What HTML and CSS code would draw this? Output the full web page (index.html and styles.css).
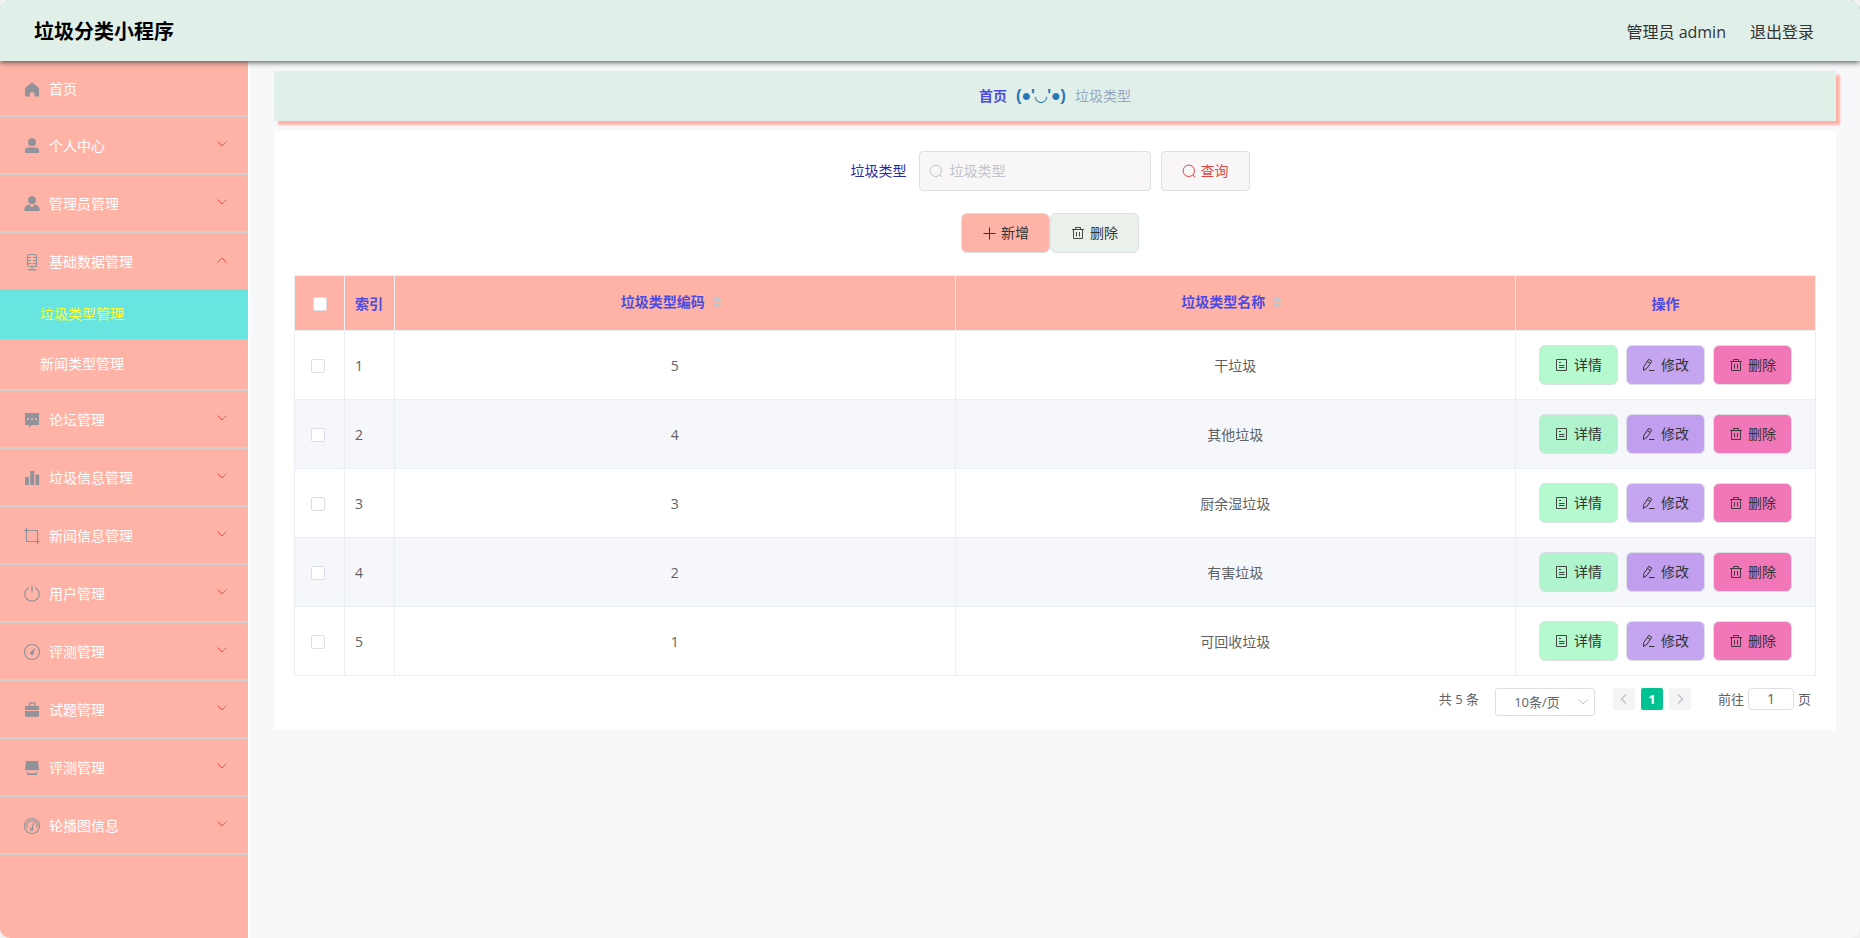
FILE: index.html
```html
<!DOCTYPE html>
<html lang="zh-CN">
<head>
<meta charset="utf-8">
<title>垃圾分类小程序</title>
<link rel="stylesheet" href="styles.css">
</head>
<body>
<svg class="sprite" aria-hidden="true">
  <symbol id="i-down" viewBox="0 0 12 12"><path d="M1.5 3.5 6 8l4.500-4.500" fill="none" stroke="currentColor"/></symbol>
  <symbol id="i-left" viewBox="0 0 12 12"><path d="M8 1.500 3.500 6 8 10.500" fill="none" stroke="currentColor" stroke-width="1.500"/></symbol>
  <symbol id="i-right" viewBox="0 0 12 12"><path d="M4 1.500 8.500 6 4 10.500" fill="none" stroke="currentColor" stroke-width="1.500"/></symbol>
  <symbol id="i-search" viewBox="0 0 14 14"><g fill="none" stroke="currentColor"><circle cx="6.800" cy="6.800" r="5.700"/><path d="m10.800 10.800 2.200 2.200"/></g></symbol>
  <symbol id="i-plus" viewBox="0 0 14 14"><path d="M7.500 1.500v12M1.500 7.500h12" fill="none" stroke="currentColor"/></symbol>
  <symbol id="i-trash" viewBox="0 0 14 14"><path d="M1 3.500h12M2.500 3.500v9h9v-9M4.500 3.500v-2h5v2M5.500 6v4.500M8.500 6v4.500" fill="none" stroke="currentColor" stroke-width=".9"/></symbol>
  <symbol id="i-doc" viewBox="0 0 14 14"><path d="M1.500 1.500h10v11h-10zM4 4.500h2M4 7.500h5.500M4 9.500h5.500" fill="none" stroke="currentColor" stroke-width=".9"/></symbol>
  <symbol id="i-edit" viewBox="0 0 14 14"><path d="M1.500 12.500 1.800 8.600 6.800 1.300 9.800 3.200 5 10.300zM5.300 3.500 8.300 5.400M7 12.500h5.500" fill="none" stroke="currentColor"/></symbol>
  <symbol id="i-home" viewBox="0 0 18 18"><path d="M9 2.500 16 8v8.500h-4.500v-4h-4.500v4H2V8z" fill="currentColor"/></symbol>
  <symbol id="i-user" viewBox="0 0 18 18"><path d="M9 1.200a4 4 0 1 1 0 8 4 4 0 0 1 0-8zM5 10.500h8q3 0 3 3V16H2v-2.500q0-3 3-3z" fill="currentColor"/></symbol>
  <symbol id="i-admin" viewBox="0 0 18 18"><path d="M9 1.200a4 4 0 1 1 0 8 4 4 0 0 1 0-8zM6.300 9.300 9 12.500l2.700-3.200c3 .7 5 2.700 5 5.200V16H1.300v-1.500c0-2.500 2-4.500 5-5.200z" fill="currentColor"/></symbol>
  <symbol id="i-mic" viewBox="0 0 18 18"><g fill="none" stroke="currentColor" stroke-width="1.200"><rect x="4.500" y="1.500" width="9" height="12" rx="2"/><path d="M5 4.500h3M10 4.500h3M5 7.500h3M10 7.500h3M5 10.500h3M10 10.500h3M9 13.500v3.500M4.500 16.800h9"/></g></symbol>
  <symbol id="i-chat" viewBox="0 0 18 18"><path d="M2 2h14v12H9l-3 2.500V14H2zM4 7.200v1.800h1.800V7.200zM8.100 7.200v1.800h1.800V7.200zM12.200 7.200v1.800h1.800V7.200z" fill="currentColor" fill-rule="evenodd"/></symbol>
  <symbol id="i-bars" viewBox="0 0 18 18"><path d="M2 8h4v8H2zM7.200 2h4v14h-4zM12.400 5.500h3.800V16h-3.800z" fill="currentColor"/></symbol>
  <symbol id="i-crop" viewBox="0 0 18 18"><path d="M1 3.500h13.500V17M3.500 1v13.500H17" fill="none" stroke="currentColor" stroke-width="1.200"/></symbol>
  <symbol id="i-power" viewBox="0 0 18 18"><path d="M9 .5v7M5.800 2.600a7.200 7.200 0 1 0 6.400 0" fill="none" stroke="currentColor" stroke-width="1.200"/></symbol>
  <symbol id="i-compass" viewBox="0 0 18 18"><circle cx="9" cy="9" r="7.500" fill="none" stroke="currentColor" stroke-width="1.200"/><path d="M12.200 4.800 10.600 10.800Q9.500 12.600 7.800 11.800 6.300 10.600 7.500 9z" fill="currentColor"/></symbol>
  <symbol id="i-case" viewBox="0 0 18 18"><path d="M6 1.500h6.500V5H16v4H2V5h4zM7.300 2.800V5h3.900V2.800zM2 10h14v5.800H2z" fill="currentColor" fill-rule="evenodd"/></symbol>
  <symbol id="i-goods" viewBox="0 0 18 18"><path d="M3 2h12l1 8.500-1.500 1.300-1.800-1-1.900 1-1.800-1-1.800 1-1.900-1-1.800 1L2 10.500zM4 13h1.300v1.300h7.400V13H14v3H4z" fill="currentColor"/></symbol>
  <symbol id="i-gauge" viewBox="0 0 18 18"><g fill="none" stroke="currentColor" stroke-width="1.200"><circle cx="9" cy="9" r="7.500"/><path d="M4.300 11A5.200 5.200 0 1 1 13.700 11M10.500 6 9.300 11"/><circle cx="8.800" cy="12.300" r="1.200"/></g></symbol>
</svg>
<div class="app">
  <header class="topbar">
    <h1 class="brand">垃圾分类小程序</h1>
    <nav class="account">
      <span>管理员 admin</span>
      <a href="#">退出登录</a>
    </nav>
  </header>
  <div class="body">
    <aside class="sidebar">
      <ul class="menu">
        <li class="item first"><a href="#"><svg class="ico"><use href="#i-home"/></svg>首页</a></li>
        <li class="item"><a href="#"><svg class="ico"><use href="#i-user"/></svg>个人中心<svg class="arrow"><use href="#i-down"/></svg></a></li>
        <li class="item"><a href="#"><svg class="ico"><use href="#i-admin"/></svg>管理员管理<svg class="arrow"><use href="#i-down"/></svg></a></li>
        <li class="item open"><a href="#"><svg class="ico"><use href="#i-mic"/></svg>基础数据管理<svg class="arrow"><use href="#i-down"/></svg></a>
          <ul class="submenu">
            <li><a class="active" href="#">垃圾类型管理</a></li>
            <li><a href="#">新闻类型管理</a></li>
          </ul>
        </li>
        <li class="item"><a href="#"><svg class="ico"><use href="#i-chat"/></svg>论坛管理<svg class="arrow"><use href="#i-down"/></svg></a></li>
        <li class="item"><a href="#"><svg class="ico"><use href="#i-bars"/></svg>垃圾信息管理<svg class="arrow"><use href="#i-down"/></svg></a></li>
        <li class="item"><a href="#"><svg class="ico"><use href="#i-crop"/></svg>新闻信息管理<svg class="arrow"><use href="#i-down"/></svg></a></li>
        <li class="item"><a href="#"><svg class="ico"><use href="#i-power"/></svg>用户管理<svg class="arrow"><use href="#i-down"/></svg></a></li>
        <li class="item"><a href="#"><svg class="ico"><use href="#i-compass"/></svg>评测管理<svg class="arrow"><use href="#i-down"/></svg></a></li>
        <li class="item"><a href="#"><svg class="ico"><use href="#i-case"/></svg>试题管理<svg class="arrow"><use href="#i-down"/></svg></a></li>
        <li class="item"><a href="#"><svg class="ico"><use href="#i-goods"/></svg>评测管理<svg class="arrow"><use href="#i-down"/></svg></a></li>
        <li class="item"><a href="#"><svg class="ico"><use href="#i-gauge"/></svg>轮播图信息<svg class="arrow"><use href="#i-down"/></svg></a></li>
      </ul>
    </aside>
    <main class="main">
      <nav class="crumbs">
        <a href="#">首页</a>
        <span class="face">(●'◡'●)</span>
        <span class="here">垃圾类型</span>
      </nav>
      <section class="card">
        <form class="query">
          <label for="kind">垃圾类型</label>
          <div class="search">
            <svg class="glyph"><use href="#i-search"/></svg>
            <input id="kind" type="text" placeholder="垃圾类型">
          </div>
          <button class="btn find" type="button"><svg class="glyph"><use href="#i-search"/></svg>查询</button>
        </form>
        <div class="tools">
          <button class="btn add" type="button"><svg class="glyph"><use href="#i-plus"/></svg>新增</button>
          <button class="btn remove" type="button"><svg class="glyph"><use href="#i-trash"/></svg>删除</button>
        </div>
        <table class="grid">
          <colgroup><col class="c-check"><col class="c-index"><col><col><col class="c-ops"></colgroup>
          <thead>
            <tr>
              <th class="check"><input type="checkbox" aria-label="全选"></th>
              <th class="index">索引</th>
              <th><span class="sortable">垃圾类型编码<span class="carets"></span></span></th>
              <th><span class="sortable">垃圾类型名称<span class="carets"></span></span></th>
              <th>操作</th>
            </tr>
          </thead>
          <tbody>
            <tr><td class="check"><input type="checkbox" aria-label="选择 1"></td><td class="index">1</td><td>5</td><td>干垃圾</td><td class="actions"><div class="ops"><button class="btn op view" type="button"><svg class="glyph"><use href="#i-doc"/></svg>详情</button><button class="btn op edit" type="button"><svg class="glyph"><use href="#i-edit"/></svg>修改</button><button class="btn op del" type="button"><svg class="glyph"><use href="#i-trash"/></svg>删除</button></div></td></tr>
            <tr><td class="check"><input type="checkbox" aria-label="选择 2"></td><td class="index">2</td><td>4</td><td>其他垃圾</td><td class="actions"><div class="ops"><button class="btn op view" type="button"><svg class="glyph"><use href="#i-doc"/></svg>详情</button><button class="btn op edit" type="button"><svg class="glyph"><use href="#i-edit"/></svg>修改</button><button class="btn op del" type="button"><svg class="glyph"><use href="#i-trash"/></svg>删除</button></div></td></tr>
            <tr><td class="check"><input type="checkbox" aria-label="选择 3"></td><td class="index">3</td><td>3</td><td>厨余湿垃圾</td><td class="actions"><div class="ops"><button class="btn op view" type="button"><svg class="glyph"><use href="#i-doc"/></svg>详情</button><button class="btn op edit" type="button"><svg class="glyph"><use href="#i-edit"/></svg>修改</button><button class="btn op del" type="button"><svg class="glyph"><use href="#i-trash"/></svg>删除</button></div></td></tr>
            <tr><td class="check"><input type="checkbox" aria-label="选择 4"></td><td class="index">4</td><td>2</td><td>有害垃圾</td><td class="actions"><div class="ops"><button class="btn op view" type="button"><svg class="glyph"><use href="#i-doc"/></svg>详情</button><button class="btn op edit" type="button"><svg class="glyph"><use href="#i-edit"/></svg>修改</button><button class="btn op del" type="button"><svg class="glyph"><use href="#i-trash"/></svg>删除</button></div></td></tr>
            <tr><td class="check"><input type="checkbox" aria-label="选择 5"></td><td class="index">5</td><td>1</td><td>可回收垃圾</td><td class="actions"><div class="ops"><button class="btn op view" type="button"><svg class="glyph"><use href="#i-doc"/></svg>详情</button><button class="btn op edit" type="button"><svg class="glyph"><use href="#i-edit"/></svg>修改</button><button class="btn op del" type="button"><svg class="glyph"><use href="#i-trash"/></svg>删除</button></div></td></tr>
          </tbody>
        </table>
        <div class="pager">
          <span class="total">共 5 条</span>
          <div class="size">
            <select aria-label="每页条数"><option>10条/页</option></select>
            <svg class="caret"><use href="#i-down"/></svg>
          </div>
          <div class="pages">
            <button type="button" aria-label="上一页" disabled><svg><use href="#i-left"/></svg></button>
            <button type="button" class="current">1</button>
            <button type="button" aria-label="下一页" disabled><svg><use href="#i-right"/></svg></button>
          </div>
          <div class="jump"><label for="page">前往</label><input id="page" type="text" value="1"><span>页</span></div>
        </div>
      </section>
    </main>
  </div>
</div>
</body>
</html>
```
FILE: styles.css
```css
* { box-sizing: border-box; }
html, body { height: 100%; }
body {
  margin: 0;
  background: #f1f1f1;
  color: #606266;
  font: 14px/20px "Open Sans", "Noto Sans CJK SC", sans-serif;
}
a { color: inherit; text-decoration: none; }
ul { margin: 0; padding: 0; list-style: none; }
button, input, select { font: inherit; color: inherit; margin: 0; }
.sprite { display: none; }

.app {
  display: flex;
  flex-direction: column;
  min-height: 100%;
  border-radius: 10px;
  overflow: hidden;
  background: #f7f8fa;
}
.topbar {
  display: flex;
  align-items: center;
  justify-content: space-between;
  height: 61px;
  padding: 2px 46px 0 34px;
  background: #e0f0e9;
  box-shadow: 0 1px 6px #444;
  position: relative;
  z-index: 1;
}
.brand { margin: 0; font-size: 20px; line-height: 28px; color: #000; }
.account { display: flex; gap: 24px; font-size: 16px; color: #333; }

.body { display: flex; flex: 1; }
.sidebar { flex: none; width: 250px; background: #ffb3a7; border-right: 2px solid #fff; }
.item { border-bottom: 2px solid #d0d0d0; color: #fff; }
.item > a { display: flex; align-items: center; height: 56px; padding: 2px 20px 0 23px; }
.item.first > a { height: 54px; }
.ico { width: 18px; height: 18px; margin-right: 8px; color: #909399; }
.arrow { width: 12px; height: 12px; margin: 0 0 4px auto; color: #ff4d40; }
.open .arrow { transform: rotate(180deg); }
.submenu a { display: flex; align-items: center; height: 50px; padding-left: 40px; }
.submenu .active { background: #69e5e1; color: #ff3; }

.main { flex: 1; min-width: 0; padding: 10px 24px; }
.crumbs {
  display: flex;
  align-items: center;
  justify-content: center;
  gap: 9px;
  height: 50px;
  background: #e0f0e9;
  box-shadow: 4px 4px 2px #ffb3a7;
}
.crumbs a { font-weight: 700; color: #4b4be0; }
.face { font-family: "Liberation Sans", "DejaVu Sans", sans-serif; font-size: 16px; font-weight: 700; color: #2775b6; }
.here { color: #97a8be; }

.card { margin-top: 10px; padding: 20px 20px 14px; background: #fff; }
.query, .tools { display: flex; justify-content: center; align-items: center; padding-right: 10px; }
.query label { margin-right: 12px; color: #2b2ba0; }
.search {
  display: flex;
  align-items: center;
  width: 232px;
  height: 40px;
  margin-right: 10px;
  padding: 0 9px;
  gap: 7px;
  border: 1px solid #dcdfe6;
  border-radius: 4px;
  background: #f8f6f7;
  color: #c0c4cc;
}
.search input { flex: 1; min-width: 0; border: 0; padding: 0; background: none; outline: 0; }
.search input::placeholder { color: #c0c4cc; }
.glyph { flex: none; width: 14px; height: 14px; }
.btn {
  display: flex;
  align-items: center;
  gap: 5px;
  height: 40px;
  padding: 0 20px;
  border: 1px solid #dcdfe6;
  border-radius: 6px;
  color: #333;
}
.find { border-radius: 4px; background: #f8f6f7; color: #dc4a4a; }
.tools { margin-top: 22px; }
.add { background: #ffb3a7; }
.remove { background: #e9f1ea; }

.grid {
  width: 100%;
  margin-top: 22px;
  table-layout: fixed;
  border-collapse: separate;
  border-spacing: 0;
  border: solid #ebeef5;
  border-width: 1px 0 0 1px;
}
.c-check, .c-index { width: 50px; }
.c-ops { width: 300px; }
.grid th, .grid td {
  padding: 2px 0 0;
  text-align: center;
  border: solid #ebeef5;
  border-width: 0 1px 1px 0;
}
.grid th { height: 55px; background: #ffb3a7; color: #4b4be0; }
.grid td { height: 69px; }
.grid .actions { padding-top: 0; }
.grid .index { padding-left: 10px; text-align: left; }
.grid tbody tr:nth-child(even) { background: #f5f7fa; }
.grid .check { padding-right: 4px; }
.grid th.check { padding-right: 0; }
.check input {
  appearance: none;
  display: block;
  width: 14px;
  height: 14px;
  margin: 0 auto;
  border: 1px solid #dcdfe6;
  border-radius: 2px;
  background: #fff;
}
.sortable { display: inline-flex; align-items: center; gap: 7px; padding-bottom: 4px; }
.carets { display: flex; flex-direction: column; gap: 2px; margin-right: 7px; }
.carets::before, .carets::after { content: ""; border: 5px solid transparent; }
.carets::before { border-top: 0; border-bottom-color: #c0c4cc; }
.carets::after { border-bottom: 0; border-top-color: #c0c4cc; }
.ops { display: flex; justify-content: center; gap: 8px; }
.op { padding: 0 15px; }
.view { background: #b5f9ce; }
.edit { background: #c6a5f0; }
.del { background: #f277b9; }
.grid tr:nth-child(even) .view { background: #aff4cc; }
.grid tr:nth-child(even) .edit { background: #c29fee; }

.pager {
  display: flex;
  justify-content: flex-end;
  align-items: flex-start;
  margin-top: 12px;
  padding-right: 5px;
  font-size: 13px;
  line-height: 22px;
}
.size { display: grid; width: 100px; height: 28px; margin: 0 18px 0 16px; }
.size select, .size .caret { grid-area: 1 / 1; }
.size select {
  appearance: none;
  padding: 0 16px 0 0;
  border: 1px solid #dcdfe6;
  border-radius: 3px;
  background: #fff;
  text-align: center;
  text-align-last: center;
}
.size .caret { width: 12px; height: 12px; margin-right: 6px; place-self: center end; color: #c0c4cc; pointer-events: none; }
.pages { display: flex; gap: 6px; margin-right: 27px; }
.pages button {
  display: grid;
  place-items: center;
  width: 22px;
  height: 22px;
  padding: 0;
  border: 0;
  border-radius: 2px;
  background: #f4f4f5;
  color: #c0c4cc;
  font-weight: 700;
}
.pages svg { width: 12px; height: 12px; }
.pages .current { background: #00c292; color: #fff; }
.jump { display: flex; gap: 4px; }
.jump input {
  width: 46px;
  height: 22px;
  padding: 0;
  border: 1px solid #dcdfe6;
  border-radius: 4px;
  background: #fff;
  text-align: center;
  font-size: 14px;
}
```
